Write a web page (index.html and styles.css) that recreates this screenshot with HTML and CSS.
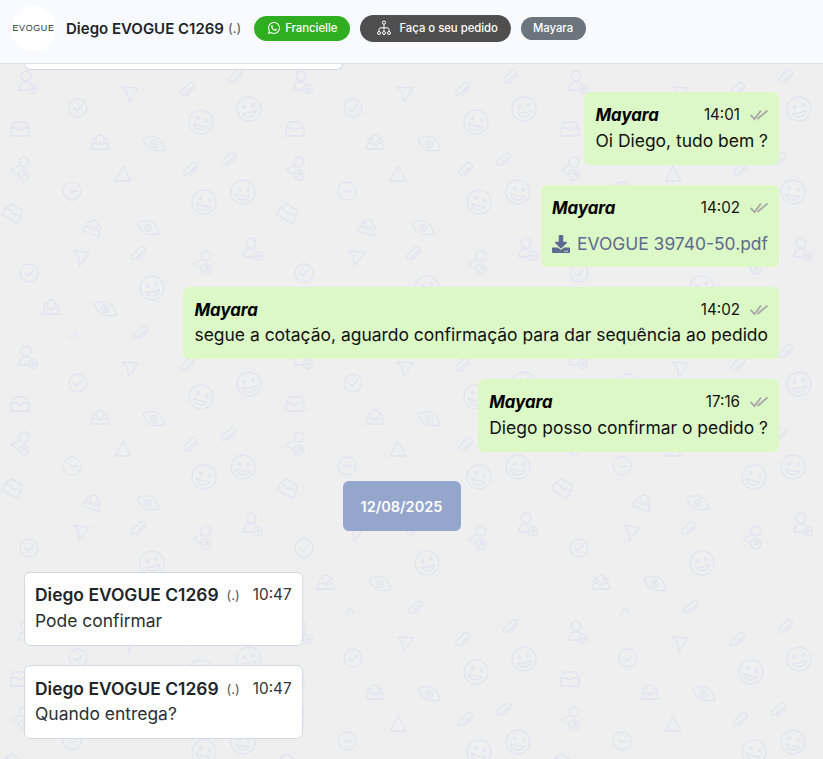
FILE: index.html
```html
<!DOCTYPE html>
<html lang="en">
<head>
<meta charset="UTF-8" />
<title>Chat</title>
<link rel="stylesheet" href="styles.css">
</head>
<body>
<div class="header">
  <div class="avatar"><span class="logo">EVOGUE</span></div>
  <span class="contact-name">Diego EVOGUE C1269</span>
  <span class="contact-tag">(.)</span>
  <span class="pill pill-green">
    <svg class="pill-icon" viewBox="0 0 16 16" width="12" height="12"><path fill="currentColor" d="M13.601 2.326A7.854 7.854 0 0 0 7.994 0C3.627 0 .068 3.558.064 7.926c0 1.399.366 2.76 1.057 3.965L0 16l4.204-1.102a7.933 7.933 0 0 0 3.79.965h.004c4.368 0 7.926-3.558 7.93-7.93A7.898 7.898 0 0 0 13.6 2.326zM7.994 14.521a6.573 6.573 0 0 1-3.356-.92l-.24-.144-2.494.654.666-2.433-.156-.251a6.56 6.56 0 0 1-1.007-3.505c0-3.626 2.957-6.584 6.591-6.584a6.56 6.56 0 0 1 4.66 1.931 6.557 6.557 0 0 1 1.928 4.66c-.004 3.639-2.961 6.592-6.592 6.592zm3.615-4.934c-.197-.099-1.17-.578-1.353-.646-.182-.065-.315-.099-.445.099-.133.197-.513.646-.627.775-.114.133-.232.148-.43.05-.197-.1-.836-.308-1.592-.985-.59-.525-.985-1.175-1.103-1.372-.114-.198-.011-.304.088-.403.087-.088.197-.232.296-.346.1-.114.133-.198.198-.33.065-.134.034-.248-.015-.347-.05-.099-.445-1.076-.612-1.47-.16-.389-.323-.335-.445-.34-.114-.007-.247-.007-.38-.007a.729.729 0 0 0-.529.247c-.182.198-.691.677-.691 1.654 0 .977.71 1.916.81 2.049.098.133 1.394 2.132 3.383 2.992.47.205.84.326 1.129.418.475.152.904.129 1.246.08.38-.058 1.171-.48 1.338-.943.164-.464.164-.86.114-.943-.049-.084-.182-.133-.38-.232z"/></svg>
    Francielle
  </span>
  <span class="pill pill-dark">
    <svg class="pill-icon" viewBox="0 0 16 16" width="16" height="16" fill="none" stroke="currentColor" stroke-width="1"><circle cx="8" cy="2.6" r="1.6"/><path d="M8 4.2V11.500M3 11.500V9.500Q3 7.800 5 7.800H11Q13 7.800 13 9.500V11.500"/><circle cx="3" cy="13" r="1.500"/><circle cx="8" cy="13" r="1.500"/><circle cx="13" cy="13" r="1.500"/></svg>
    Faça o seu pedido
  </span>
  <span class="pill pill-grey">Mayara</span>
</div>

<div class="chat">
  <svg class="wallpaper" width="100%" height="100%">
    <defs>
      <g id="i-smile"><circle r="12"/><circle class="solid" cx="-4" cy="-3" r="1.3"/><circle class="solid" cx="5" cy="-3" r="1.3"/><path class="solid" d="M-7 3Q0 5 7 3Q5 8 0 8Q-5 8 -7 3Z"/></g>
      <g id="i-check"><circle r="9"/><path d="M-4.500 0L-1 3L4.500-3"/></g>
      <g id="i-send"><path d="M-8-7L8-6L-1 8L-3-2Z"/></g>
      <g id="i-clip"><path d="M6 1.500H-5A2.400 2.400 0 0 1 -5-3.300H5.500A3.500 3.500 0 0 1 5.500 3.700H-5"/></g>
      <g id="i-inbox"><path d="M-9-1L-6-7H6L9-1V7H-9ZM-9-1H-3Q0 3 3-1H9"/></g>
      <g id="i-people"><circle cy="-3" r="4"/><path d="M-9 7Q-9 3-5 1Q0 5 5 1Q9 3 9 7Z"/><path d="M-4-4Q-8-3-7 1M4-4Q8-3 7 1"/></g>
      <g id="i-eye"><path d="M-11-5Q-3-9 4-6Q9-3 11 6Q2 8-4 5Q-9 1-11-5Z"/><circle r="3.500"/><circle class="solid" r="1"/></g>
      <g id="i-personadd"><circle cx="-1" cy="-8" r="5"/><path d="M-8 6Q-8-1-3-2H2Q4-1 4 0M-8 6H1"/><circle cx="6" cy="5" r="4.500"/><path d="M3.500 5H8.500M6 2.500V7.500"/></g>
      <g id="i-personx"><circle cx="1" cy="-7" r="5"/><path d="M-3-4L-12 1L-4 6"/><circle cx="1" cy="6" r="5"/><path d="M-1 8L3 4M0 4H3V7"/></g>
      <g id="i-triangle"><path class="thick" d="M0-8L8 7H-8Z"/></g>
      <g id="i-clock"><circle r="9"/><path d="M-3-2L-1 1L5 0"/></g>
      <g id="i-chevron"><path class="thick" d="M-4 4L0-3L4 4"/></g>
      <pattern id="tile" width="275" height="275" patternUnits="userSpaceOnUse" class="tile">
        <use href="#i-personadd" transform="translate(27 20)"/>
        <use href="#i-check" transform="translate(78 44)"/>
        <use href="#i-send" transform="translate(130 30)"/>
        <use href="#i-clip" transform="translate(187 26) rotate(-45)"/>
        <use href="#i-clip" transform="translate(235 13) rotate(-45)"/>
        <use href="#i-smile" transform="translate(201 58) rotate(15)"/>
        <use href="#i-smile" transform="translate(249 45) rotate(-12)"/>
        <use href="#i-inbox" transform="translate(20 65)"/>
        <use href="#i-people" transform="translate(100 78)"/>
        <use href="#i-eye" transform="translate(154 80)"/>
        <use href="#i-personx" transform="translate(23 105)"/>
        <use href="#i-triangle" transform="translate(123 110)"/>
        <use href="#i-clip" transform="translate(190 106) rotate(-45)"/>
        <use href="#i-clip" transform="translate(228 96) rotate(-40)"/>
        <use href="#i-clock" transform="translate(72 127)"/>
        <use href="#i-smile" transform="translate(204 138) rotate(15)"/>
        <use href="#i-smile" transform="translate(243 128) rotate(8)"/>
        <use href="#i-inbox" transform="translate(13 149) rotate(30)"/>
        <use href="#i-people" transform="translate(93 163) rotate(20)"/>
        <use href="#i-eye" transform="translate(148 164)"/>
        <use href="#i-send" transform="translate(81 194) rotate(5)"/>
        <use href="#i-clip" transform="translate(138 190) rotate(-45)"/>
        <use href="#i-personx" transform="translate(205 199)"/>
        <use href="#i-personadd" transform="translate(252 187)"/>
        <use href="#i-check" transform="translate(29 209)"/>
        <use href="#i-smile" transform="translate(152 224) rotate(-15)"/>
        <use href="#i-people" transform="translate(51 243)"/>
        <use href="#i-eye" transform="translate(105 245)"/>
        <use href="#i-chevron" transform="translate(75 271)"/>
        <use href="#i-clip" transform="translate(140 269) rotate(-40)"/>
      </pattern>
    </defs>
    <rect width="100%" height="100%" fill="url(#tile)"/>
  </svg>

  <div class="cut-off"></div>

  <div class="msg msg-out">
    <div class="msg-head">
      <span class="author">Mayara</span>
      <span class="msg-meta"><span class="time">14:01</span><svg class="ticks" viewBox="0 0 18 12" width="18" height="12"><path d="M.5 6L4.500 10L11 1.500M7.500 10L17.500 1.500"/></svg></span>
    </div>
    <div class="msg-text">Oi Diego, tudo bem ?</div>
  </div>

  <div class="msg msg-out">
    <div class="msg-head">
      <span class="author">Mayara</span>
      <span class="msg-meta"><span class="time">14:02</span><svg class="ticks" viewBox="0 0 18 12" width="18" height="12"><path d="M.5 6L4.500 10L11 1.500M7.500 10L17.500 1.500"/></svg></span>
    </div>
    <div class="msg-file">
      <svg viewBox="0 0 512 512" width="18" height="18"><path fill="currentColor" d="M216 0h80c13.3 0 24 10.7 24 24v168h87.700c17.800 0 26.700 21.500 14.100 34.100L269.700 378.300c-7.500 7.500-19.800 7.500-27.300 0L90.100 226.100c-12.600-12.600-3.700-34.100 14.100-34.100H192V24c0-13.300 10.700-24 24-24zm296 376v112c0 13.300-10.700 24-24 24H24c-13.300 0-24-10.700-24-24V376c0-13.300 10.700-24 24-24h146.700l49 49c20.100 20.100 52.500 20.100 72.600 0l49-49H488c13.300 0 24 10.700 24 24zm-124 88c0-11-9-20-20-20s-20 9-20 20 9 20 20 20 20-9 20-20zm64 0c0-11-9-20-20-20s-20 9-20 20 9 20 20 20 20-9 20-20z"/></svg>
      EVOGUE 39740-50.pdf
    </div>
  </div>

  <div class="msg msg-out">
    <div class="msg-head">
      <span class="author">Mayara</span>
      <span class="msg-meta"><span class="time">14:02</span><svg class="ticks" viewBox="0 0 18 12" width="18" height="12"><path d="M.5 6L4.500 10L11 1.500M7.500 10L17.500 1.500"/></svg></span>
    </div>
    <div class="msg-text">segue a cotação, aguardo confirmação para dar sequência ao pedido</div>
  </div>

  <div class="msg msg-out">
    <div class="msg-head">
      <span class="author">Mayara</span>
      <span class="msg-meta"><span class="time">17:16</span><svg class="ticks" viewBox="0 0 18 12" width="18" height="12"><path d="M.5 6L4.500 10L11 1.500M7.500 10L17.500 1.500"/></svg></span>
    </div>
    <div class="msg-text">Diego posso confirmar o pedido ?</div>
  </div>

  <div class="date-chip">12/08/2025</div>

  <div class="msg msg-in">
    <div class="msg-head">
      <span class="sender">Diego EVOGUE C1269</span>
      <span class="sender-tag">(.)</span>
      <span class="time">10:47</span>
    </div>
    <div class="msg-text">Pode confirmar</div>
  </div>

  <div class="msg msg-in">
    <div class="msg-head">
      <span class="sender">Diego EVOGUE C1269</span>
      <span class="sender-tag">(.)</span>
      <span class="time">10:47</span>
    </div>
    <div class="msg-text">Quando entrega?</div>
  </div>
</div>
</body>
</html>
```

FILE: styles.css
```css
* { margin: 0; padding: 0; box-sizing: border-box; }
html, body { height: 100%; overflow: hidden; }
body {
  display: flex;
  flex-direction: column;
  font-family: Inter, "Liberation Sans", sans-serif;
  color: #212529;
  background-color: #efefef;
}

/* top bar */
.header {
  height: 64px;
  flex: none;
  display: flex;
  align-items: center;
  padding: 0 0 7px 11px;
  background-color: #f9faff;
  border-bottom: 1px solid #dee2e6;
}
.avatar {
  width: 45px;
  height: 45px;
  display: flex;
  align-items: center;
  justify-content: center;
  background: white;
  border-radius: 50%;
}
.logo {
  font-family: "Liberation Sans", sans-serif;
  font-size: 9px;
  letter-spacing: 0.6px;
  color: #333;
}
.contact-name { margin-left: 10px; font-size: 15px; font-weight: 600; }
.contact-tag { margin-left: 4px; margin-right: 13px; font-size: 13px; color: #555; }
.pill {
  display: flex;
  align-items: center;
  border-radius: 14px;
  color: white;
  font-size: 11.3px;
  font-weight: 500;
}
.pill-green { height: 25px; padding: 0 13px 0 14px; gap: 5px; background-color: #30ae21; }
.pill-dark { height: 27px; margin-left: 10px; padding: 0 13px 0 16px; gap: 7px; background-color: #4f4f4f; }
.pill-grey { height: 23px; margin-left: 10px; padding: 0 13px 0 12px; background-color: #6c757d; }
.pill-icon { flex: none; }

/* chat area */
.chat {
  flex: 1;
  position: relative;
  display: flex;
  flex-direction: column;
  align-items: flex-start;
  padding: 0 44px 0 24px;
  overflow: hidden;
}
.wallpaper { position: absolute; left: 0; top: 0; }
.tile { fill: none; stroke: #e1e4ef; stroke-width: 1.3; stroke-linejoin: round; stroke-linecap: round; }
.tile .solid { fill: #e1e4ef; stroke: none; }
.tile .thick { stroke-width: 2; }

.cut-off {
  position: relative;
  width: 319px;
  height: 6px;
  background: white;
  border: 1px solid #d5d8e3;
  border-top: none;
  border-radius: 0 0 6px 6px;
  margin-bottom: 22px;
}

.msg {
  position: relative;
  flex: none;
  padding: 11px;
  border-radius: 6px;
  margin-bottom: 20px;
  font-size: 17.44px;
  line-height: 26px;
  color: #111;
}
.msg-out { align-self: flex-end; background-color: #dcf8c6; }
.msg-in {
  background: white;
  border: 1px solid #d5d8e3;
  padding: 10px 10px 11px;
  margin-bottom: 19.6px;
  color: #333;
}
.msg-head { display: flex; align-items: center; justify-content: space-between; height: 24.5px; }
.msg-in .msg-head { height: 25px; }
.author { font-size: 16.8px; font-weight: 700; font-style: italic; color: black; margin-right: 43px; }
.msg-meta { display: flex; align-items: center; gap: 10px; }
.time { font-size: 15.2px; }
.msg-in .time { font-size: 15.3px; }
.ticks { fill: none; stroke: #aaa; stroke-width: 1.9; }
.msg-file {
  display: flex;
  align-items: center;
  gap: 7px;
  margin-top: 11px;
  margin-bottom: -1.5px;
  color: #5e6a8f;
}
.sender { font-size: 17.44px; font-weight: 600; color: #212529; }
.sender-tag { margin-left: 8px; margin-right: 13px; font-size: 13px; color: #555; }
.msg-in .msg-text { color: #2b2f36; }

.date-chip {
  position: relative;
  flex: none;
  align-self: center;
  width: 118px;
  height: 50px;
  margin: 9.5px 0 40.5px;
  display: flex;
  align-items: center;
  justify-content: center;
  background-color: #94a6cc;
  border-radius: 6px;
  color: white;
  font-size: 14.5px;
  font-weight: 600;
}
```
